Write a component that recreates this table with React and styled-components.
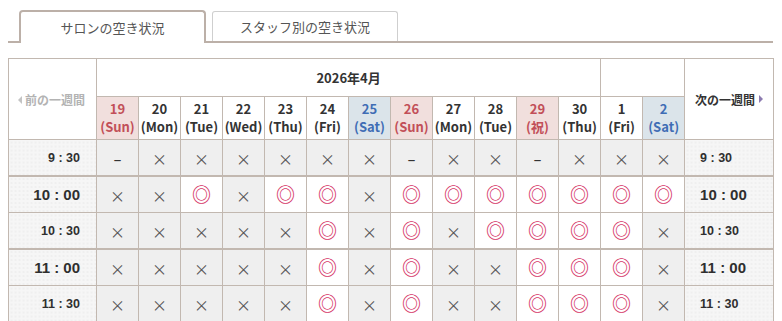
import styled, { createGlobalStyle } from "styled-components"

const GlobalStyle = createGlobalStyle`
  body {
    margin: 8px;
    background: #fff;
    font-family: "Noto Sans CJK JP", "Noto Sans", sans-serif;
    color: #333;
  }
`

const days = [
  { d: "19", w: "Sun", kind: "sun" },
  { d: "20", w: "Mon" },
  { d: "21", w: "Tue" },
  { d: "22", w: "Wed" },
  { d: "23", w: "Thu" },
  { d: "24", w: "Fri" },
  { d: "25", w: "Sat", kind: "sat" },
  { d: "26", w: "Sun", kind: "sun" },
  { d: "27", w: "Mon" },
  { d: "28", w: "Tue" },
  { d: "29", w: "祝", kind: "sun" },
  { d: "30", w: "Thu" },
  { d: "1", w: "Fri" },
  { d: "2", w: "Sat", kind: "sat" },
]

// o = ◎, x = ×, - = –
const rows = [
  { time: "9 : 30", hour: false, slots: "-xxxxxx-xx-xxx" },
  { time: "10 : 00", hour: true, slots: "xxoxooxooooooo" },
  { time: "10 : 30", hour: false, slots: "xxxxxoxoxoooox" },
  { time: "11 : 00", hour: true, slots: "xxxxxoxoxxooox" },
  { time: "11 : 30", hour: false, slots: "xxxxxoxoxxooox" },
]

export default function App() {
  return (
    <Page>
      <GlobalStyle />
      <Tabs>
        <Tab active>サロンの空き状況</Tab>
        <Tab>スタッフ別の空き状況</Tab>
      </Tabs>
      <Table>
        <colgroup>
          <col style={{ width: 88 }} />
          {days.map((_, i) => (
            <col key={i} style={{ width: 42 }} />
          ))}
          <col style={{ width: 89 }} />
        </colgroup>
        <thead>
          <tr>
            <NavCell rowSpan={2}>
              <PrevLink>
                <Arrow dir="left" />
                前の一週間
              </PrevLink>
            </NavCell>
            <MonthCell colSpan={12}>2026年4月</MonthCell>
            <MonthCell colSpan={2} />
            <NavCell rowSpan={2}>
              <NextLink>
                次の一週間
                <Arrow dir="right" />
              </NextLink>
            </NavCell>
          </tr>
          <tr>
            {days.map((day, i) => (
              <DayCell key={i} kind={day.kind}>
                {day.d}
                <br />({day.w})
              </DayCell>
            ))}
          </tr>
        </thead>
        <tbody>
          {rows.map((row, r) => (
            <Row key={r} hour={row.hour}>
              <TimeCell hour={row.hour} side="left">
                {row.time}
              </TimeCell>
              {row.slots.split("").map((s, i) => (
                <SlotCell key={i} open={s === "o"}>
                  {s === "o" ? <Circle>◎</Circle> : s === "x" ? <Cross>×</Cross> : <Dash>–</Dash>}
                </SlotCell>
              ))}
              <TimeCell hour={row.hour} side="right">
                {row.time}
              </TimeCell>
            </Row>
          ))}
        </tbody>
      </Table>
    </Page>
  )
}

const line = "#c2b8b0"

const Page = styled.div`
  width: 765px;
`

const Tabs = styled.div`
  display: flex;
  align-items: flex-end;
  gap: 6px;
  padding: 2px 0 0 11px;
  border-bottom: 2px solid #bcb0a8;
  height: 31px;
`

const Tab = styled.div`
  box-sizing: border-box;
  display: flex;
  align-items: center;
  justify-content: center;
  background: #fff;
  font-size: 13px;
  color: #555;
  ${({ active }) =>
    active
      ? `
    width: 187px;
    height: 33px;
    margin-bottom: -2px;
    border: 2px solid #bcb0a8;
    border-bottom: none;
    border-radius: 4px 4px 0 0;
  `
      : `
    width: 186px;
    height: 30px;
    border: 1px solid #cfcfcf;
    border-bottom: none;
    border-radius: 3px 3px 0 0;
  `}
`

const Table = styled.table`
  margin-top: 15px;
  width: 765px;
  table-layout: fixed;
  border-collapse: collapse;
  font-family: "Noto Sans CJK JP", "DejaVu Sans", sans-serif;

  td,
  th {
    border: 1px solid ${line};
    padding: 0;
    text-align: center;
  }
`

const NavCell = styled.th`
  background: #fff;
  font-size: 12px;
  font-weight: 700;
  vertical-align: middle;
`

const PrevLink = styled.span`
  display: inline-flex;
  align-items: center;
  gap: 3px;
  color: #b3b3b3;
  margin-left: -2px;
`

const NextLink = styled.span`
  display: inline-flex;
  align-items: center;
  gap: 4px;
  color: #333;
`

const Arrow = styled.span`
  width: 0;
  height: 0;
  border-top: 4px solid transparent;
  border-bottom: 4px solid transparent;
  ${({ dir }) =>
    dir === "left" ? `border-right: 4px solid #c4c4c4;` : `border-left: 4px solid #8c7bb0;`}
`

const MonthCell = styled.th`
  height: 37px;
  background: #fff;
  font-size: 13px;
  font-weight: 700;
  color: #333;
`

const DayCell = styled.th`
  height: 42px;
  font-size: 13px;
  font-weight: 700;
  line-height: 18px;
  background: ${({ kind }) => (kind === "sun" ? "#f1dfdd" : kind === "sat" ? "#dbe4ea" : "#fff")};
  color: ${({ kind }) => (kind === "sun" ? "#c24f58" : kind === "sat" ? "#3f6db5" : "#333")};
`

const Row = styled.tr`
  td {
    border-top-width: ${({ hour }) => (hour ? "2px" : "1px")};
  }
`

const TimeCell = styled.td`
  height: 35px;
  background-color: #f6f6f6;
  background-image: radial-gradient(#e6e6e6 0.6px, transparent 0.8px);
  background-size: 4px 4px;
  font-family: "Liberation Sans", Arial, sans-serif;
  font-weight: 700;
  font-size: ${({ hour }) => (hour ? "15px" : "12.5px")};
  color: #2f2f2f;
  text-align: ${({ side }) => (side === "left" ? "right" : "left")} !important;
  padding: ${({ side }) => (side === "left" ? "0 16px 0 0" : "0 0 0 15px")} !important;
`

const SlotCell = styled.td`
  background: ${({ open }) => (open ? "#fff" : "#efefef")};
`

const Circle = styled.span`
  font-size: 19px;
  font-weight: 700;
  color: #d6386a;
  line-height: 1;
`

const Cross = styled.span`
  font-size: 15px;
  color: #555;
  line-height: 1;
`

const Dash = styled.span`
  font-family: "DejaVu Sans", sans-serif;
  font-size: 16px;
  color: #333;
  line-height: 1;
`
